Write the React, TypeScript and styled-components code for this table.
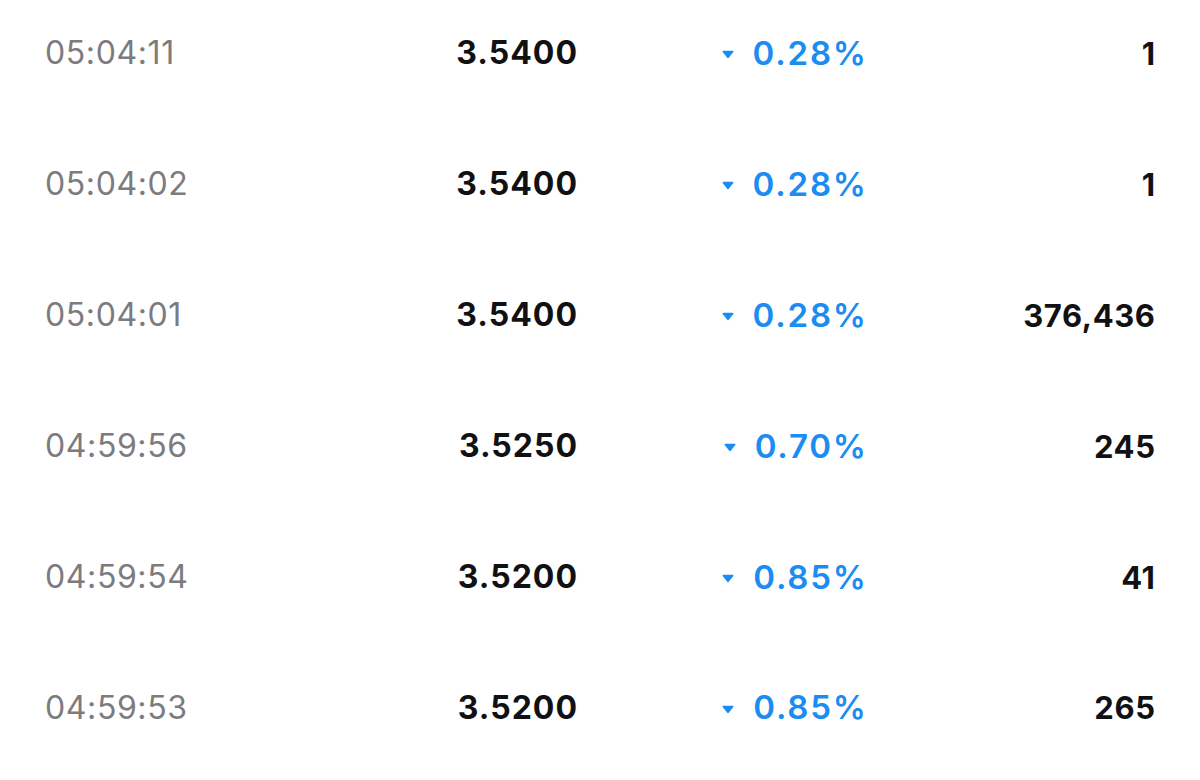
import React from "react";
import styled, { createGlobalStyle } from "styled-components";

const Global = createGlobalStyle`
  html, body { margin: 0; padding: 0; background: #ffffff; }
  body { font-family: "Inter", "Liberation Sans", sans-serif; -webkit-font-smoothing: antialiased; }
`;

const List = styled.div`
  width: 1200px;
  height: 780px;
  overflow: hidden;
  box-sizing: border-box;
  padding: 0 45px;
  margin-top: -12px;
  background: #fff;
`;

const Row = styled.div`
  display: grid;
  grid-template-columns: 255px 277px 289px 289px;
  align-items: center;
  height: 130.9px;
`;

const Time = styled.div`
  font-size: 32px;
  font-weight: 400;
  letter-spacing: 0.6px;
  color: #7b7b80;
  line-height: 1;
`;

const Price = styled.div`
  font-size: 32px;
  font-weight: 700;
  letter-spacing: 1px;
  margin-right: -1px;
  color: #111114;
  text-align: right;
  line-height: 1;
`;

const Change = styled.div`
  display: flex;
  align-items: center;
  justify-content: flex-end;
  gap: 19px;
  font-size: 33px;
  font-weight: 600;
  letter-spacing: 1.8px;
  margin-right: -1.8px;
  color: #1a8cf2;
  line-height: 1;
`;

const Arrow = styled.svg`
  flex: 0 0 auto;
  width: 12px;
  height: 9px;
  margin-top: 3px;
  display: block;
`;

const Volume = styled.div`
  font-size: 31px;
  font-weight: 700;
  letter-spacing: 0.6px;
  margin-right: -0.6px;
  color: #111114;
  text-align: right;
  line-height: 1;
`;

const rows = [
  { t: "05:04:11", p: "3.5400", c: "0.28%", v: "1" },
  { t: "05:04:02", p: "3.5400", c: "0.28%", v: "1" },
  { t: "05:04:01", p: "3.5400", c: "0.28%", v: "376,436" },
  { t: "04:59:56", p: "3.5250", c: "0.70%", v: "245" },
  { t: "04:59:54", p: "3.5200", c: "0.85%", v: "41" },
  { t: "04:59:53", p: "3.5200", c: "0.85%", v: "265" },
];

export default function App() {
  return (
    <>
      <Global />
      <List>
        {rows.map((r, i) => (
          <Row key={i}>
            <Time>{r.t}</Time>
            <Price>{r.p}</Price>
            <Change>
              <Arrow viewBox="0 0 12 9">
                <path d="M1.2 1.5 L10.8 1.5 L6 7.6 Z" fill="#1a8cf2" stroke="#1a8cf2" strokeWidth="1.4" strokeLinejoin="round" />
              </Arrow>
              <span>{r.c}</span>
            </Change>
            <Volume>{r.v}</Volume>
          </Row>
        ))}
      </List>
    </>
  );
}
